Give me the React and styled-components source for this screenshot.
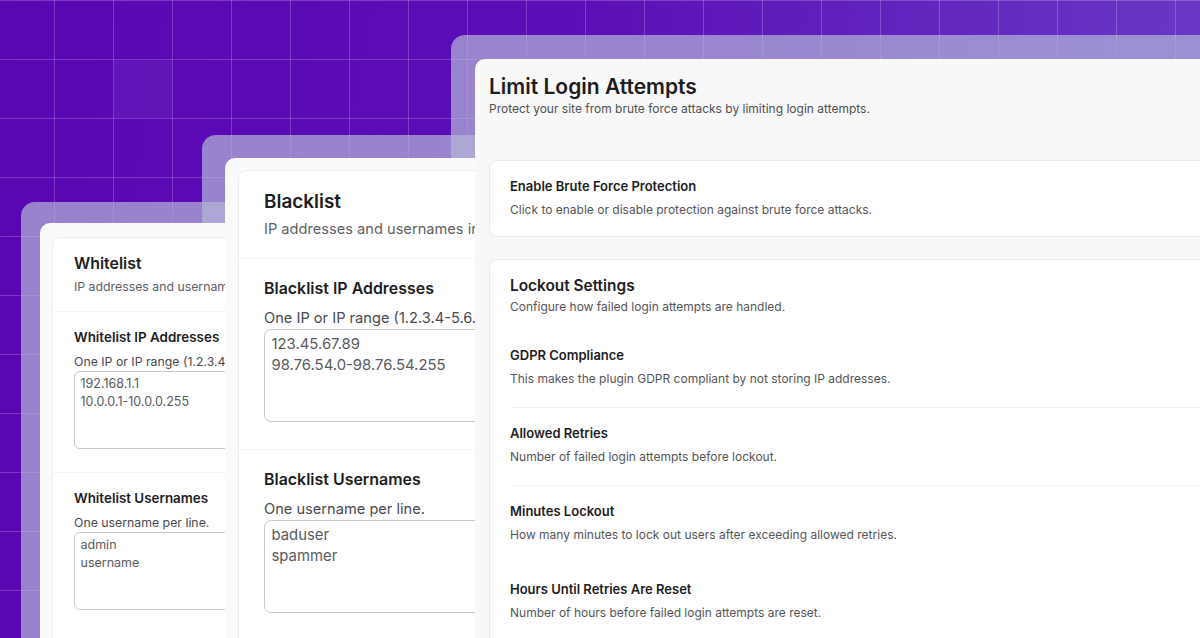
import React from 'react';
import styled, { createGlobalStyle } from 'styled-components';

const Global = createGlobalStyle`
  html, body { margin: 0; padding: 0; }
  body {
    font-family: Inter, "Noto Sans", "Liberation Sans", sans-serif;
    -webkit-font-smoothing: antialiased;
  }
  * { box-sizing: border-box; }
`;

const Stage = styled.div`
  position: relative;
  width: 1200px;
  height: 638px;
  overflow: hidden;
  background-color: #5b0cb5;
  background-image:
    linear-gradient(to right, rgba(255, 255, 255, 0.2) 1px, transparent 1px),
    linear-gradient(to bottom, rgba(255, 255, 255, 0.2) 1px, transparent 1px),
    linear-gradient(rgba(255, 255, 255, 0.05), rgba(255, 255, 255, 0.05)),
    linear-gradient(100deg, #5906b3 0%, #5c0fb6 45%, #6a3fc7 100%);
  background-size: 59px 59px, 59px 59px, 58px 58px, 100% 100%;
  background-position: 54px 0, 0 0, 114px 60px, 0 0;
  background-repeat: repeat, repeat, no-repeat, no-repeat;
`;

/* translucent window frame; it does not form a stacking context, so every
   card (z-index 1) lies above every frame, as in the reference */
const Frame = styled.div`
  position: absolute;
  left: ${p => p.$x}px;
  top: ${p => p.$y}px;
  width: ${p => p.$w}px;
  height: ${p => p.$h}px;
  padding: ${p => p.$pad};
  background: rgba(180, 182, 217, 0.7);
  border-radius: 14px;
  display: flex;
`;

const Card = styled.div`
  position: relative;
  z-index: 1;
  flex: 1;
  min-width: 0;
  background: ${p => p.$bg || '#fafafa'};
  border-radius: 10px;
  padding: ${p => p.$pad};
  overflow: hidden;
  display: flex;
  flex-direction: column;
`;

/* ---------- Whitelist / Blacklist panels ---------- */

const ListBox = styled.div`
  flex: 1;
  background: #ffffff;
  border: 1px solid #ededed;
  border-radius: 8px;
  display: flex;
  flex-direction: column;
`;

const ListHeader = styled.div`
  padding: ${p => 14 * p.$k}px ${p => 21 * p.$k}px ${p => 15 * p.$k}px;
  border-bottom: 1px solid #f5f5f5;
`;

const ListTitle = styled.h2`
  margin: 0;
  font-size: ${p => 15.9 * p.$k}px;
  line-height: ${p => 24 * p.$k}px;
  font-weight: 600;
  color: #1d1d1f;
  white-space: nowrap;
`;

const ListSubtitle = styled.p`
  margin: ${p => 2 * p.$k}px 0 0;
  font-size: ${p => 12.3 * p.$k}px;
  line-height: ${p => 18 * p.$k}px;
  color: #5f5f64;
  white-space: nowrap;
`;

const ListSection = styled.div`
  padding: ${p => 15 * p.$k}px ${p => 21 * p.$k}px ${p => 23 * p.$k}px;
  border-bottom: ${p => (p.$last ? 'none' : '1px solid #f4f4f4')};
`;

const FieldLabel = styled.h3`
  margin: 0;
  font-size: ${p => 13.4 * p.$k}px;
  line-height: ${p => 20 * p.$k}px;
  font-weight: 600;
  color: #1d1d1f;
  white-space: nowrap;
`;

const FieldHelp = styled.p`
  margin: ${p => 6 * p.$k}px 0 0;
  font-size: ${p => 12.3 * p.$k}px;
  line-height: ${p => 18 * p.$k}px;
  color: #4a4a4f;
  white-space: nowrap;
`;

const Area = styled.textarea`
  display: block;
  width: ${p => 420 * p.$k}px;
  height: ${p => 78 * p.$k}px;
  margin: 0;
  padding: ${p => 3 * p.$k}px ${p => 5.5 * p.$k}px;
  border: 1px solid #c9c9cc;
  border-radius: ${p => 6 * p.$k}px;
  background: #fff;
  font-family: Inter, "Noto Sans", "Liberation Sans", sans-serif;
  font-size: ${p => 12.5 * p.$k}px;
  line-height: ${p => 18 * p.$k}px;
  color: #5a5a60;
  resize: none;
  overflow: hidden;
  outline: none;
`;

function ListPanel({ k, name, subtitle, ipHelp, ips, users }) {
  return (
    <ListBox>
      <ListHeader $k={k}>
        <ListTitle $k={k}>{name}</ListTitle>
        <ListSubtitle $k={k}>{subtitle}</ListSubtitle>
      </ListHeader>
      <ListSection $k={k}>
        <FieldLabel $k={k}>{name} IP Addresses</FieldLabel>
        <FieldHelp $k={k}>{ipHelp}</FieldHelp>
        <Area $k={k} readOnly defaultValue={ips} />
      </ListSection>
      <ListSection $k={k} $last>
        <FieldLabel $k={k}>{name} Usernames</FieldLabel>
        <FieldHelp $k={k}>One username per line.</FieldHelp>
        <Area $k={k} readOnly defaultValue={users} />
      </ListSection>
    </ListBox>
  );
}

/* ---------- Limit Login Attempts ---------- */

const PageHeader = styled.div`
  padding-right: 20px;
`;

const PageTitle = styled.h1`
  margin: 0;
  font-size: 21px;
  line-height: 28px;
  font-weight: 600;
  color: #1d1d1f;
  white-space: nowrap;
`;

const PageSubtitle = styled.p`
  margin: -1px 0 0;
  font-size: 12px;
  line-height: 18px;
  color: #505055;
  white-space: nowrap;
`;

const SettingsBox = styled.section`
  margin-top: ${p => p.$gap}px;
  background: #ffffff;
  border: 1px solid #ebebeb;
  border-right: none;
  border-radius: 8px 0 0 8px;
  padding: ${p => p.$pad};
`;

const BoxTitle = styled.h2`
  margin: 0;
  font-size: ${p => (p.$big ? 15.4 : 13)}px;
  line-height: ${p => (p.$big ? 24 : 20)}px;
  font-weight: 600;
  color: #1d1d1f;
  white-space: nowrap;
`;

const Desc = styled.p`
  margin: ${p => p.$gap}px 0 0;
  font-size: 12px;
  line-height: 18px;
  color: #55555a;
  white-space: nowrap;
`;

const RowList = styled.div`
  margin-top: 14px;
  display: flex;
  flex-direction: column;
`;

const Row = styled.div`
  padding: 15px 0 19px;
  border-bottom: 1px solid ${p => (p.$divider ? '#f1f1f1' : 'transparent')};
`;

const RowTitle = styled.h3`
  margin: 0;
  font-size: 13px;
  line-height: 20px;
  font-weight: 600;
  color: #1d1d1f;
  white-space: nowrap;
`;

const rows = [
  ['GDPR Compliance', 'This makes the plugin GDPR compliant by not storing IP addresses.', true],
  ['Allowed Retries', 'Number of failed login attempts before lockout.', true],
  ['Minutes Lockout', 'How many minutes to lock out users after exceeding allowed retries.', false],
  ['Hours Until Retries Are Reset', 'Number of hours before failed login attempts are reset.', false],
];

export default function App() {
  return (
    <>
      <Global />
      <Stage>
        <Frame $x={21} $y={202} $w={420} $h={480} $pad="21px 0 0 19px">
          <Card $pad="14px 0 0 12px">
            <ListPanel
              k={1}
              name="Whitelist"
              subtitle="IP addresses and usernames in this list will never be blocked."
              ipHelp="One IP or IP range (1.2.3.4-5.6.7.8) per line."
              ips={'192.168.1.1\n10.0.0.1-10.0.0.255'}
              users={'admin\nusername'}
            />
          </Card>
        </Frame>

        <Frame $x={202} $y={135} $w={440} $h={560} $pad="23px 0 0 23px">
          <Card $pad="12px 0 0 13px">
            <ListPanel
              k={1.19}
              name="Blacklist"
              subtitle="IP addresses and usernames in this list will always be blocked."
              ipHelp="One IP or IP range (1.2.3.4-5.6.7.8) per line."
              ips={'123.45.67.89\n98.76.54.0-98.76.54.255'}
              users={'baduser\nspammer'}
            />
          </Card>
        </Frame>

        <Frame $x={451} $y={35} $w={820} $h={700} $pad="24px 0 0 24px">
          <Card $bg="#f8f8f8" $pad="14px 0 0 14px">
            <PageHeader>
              <PageTitle>Limit Login Attempts</PageTitle>
              <PageSubtitle>Protect your site from brute force attacks by limiting login attempts.</PageSubtitle>
            </PageHeader>

            <SettingsBox $gap={42} $pad="15px 20px 17px">
              <BoxTitle>Enable Brute Force Protection</BoxTitle>
              <Desc $gap={5}>Click to enable or disable protection against brute force attacks.</Desc>
            </SettingsBox>

            <SettingsBox $gap={22} $pad="14px 20px 40px">
              <BoxTitle $big>Lockout Settings</BoxTitle>
              <Desc $gap={0}>Configure how failed login attempts are handled.</Desc>
              <RowList>
                {rows.map(([t, d, divider]) => (
                  <Row key={t} $divider={divider}>
                    <RowTitle>{t}</RowTitle>
                    <Desc $gap={5}>{d}</Desc>
                  </Row>
                ))}
              </RowList>
            </SettingsBox>
          </Card>
        </Frame>
      </Stage>
    </>
  );
}
